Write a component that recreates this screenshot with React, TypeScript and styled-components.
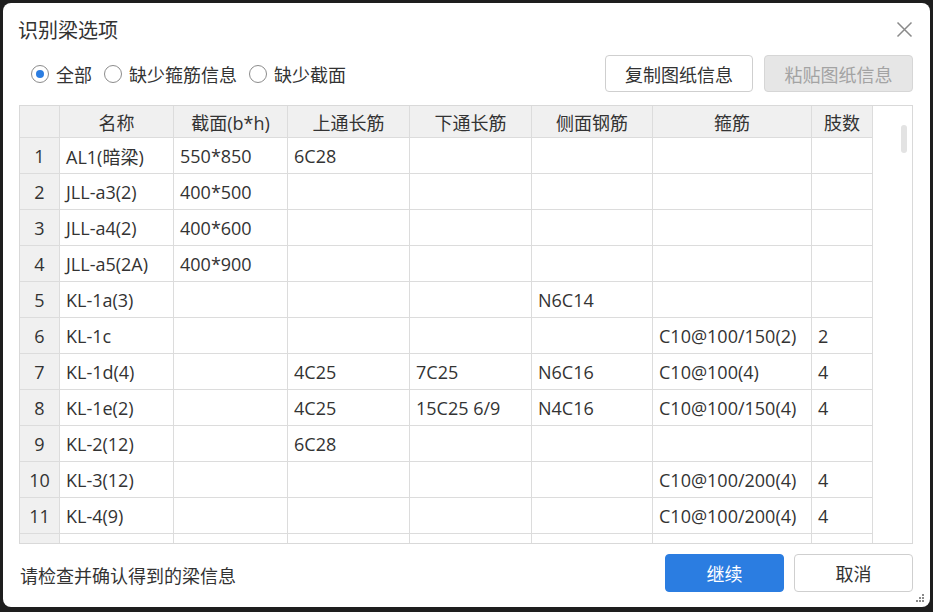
import React from "react";
import styled, { createGlobalStyle } from "styled-components";

const FONT = `"Open Sans", "Noto Sans CJK SC", sans-serif`;

const GlobalStyle = createGlobalStyle`
  html, body { margin: 0; padding: 0; }
  body {
    background: #1e1e1e;
    font-family: ${FONT};
    color: #333;
    width: 933px;
    height: 612px;
    overflow: hidden;
  }
`;

const Dialog = styled.div`
  box-sizing: border-box;
  margin: 3px 0 0 3px;
  width: 927px;
  height: 604px;
  background: #fff;
  border-radius: 8px;
  padding: 0 17px 0 16px;
  display: flex;
  flex-direction: column;
  position: relative;
`;

const TitleBar = styled.div`
  height: 52px;
  display: flex;
  align-items: center;
  justify-content: space-between;
`;

const Title = styled.div`
  font-size: 20px;
  margin-left: -1px;
  color: #333;
`;

const CloseButton = styled.button`
  border: none;
  background: none;
  padding: 0;
  width: 18px;
  height: 18px;
  display: flex;
  align-items: center;
  justify-content: center;
  cursor: pointer;
`;

const Toolbar = styled.div`
  height: 37px;
  display: flex;
  align-items: center;
`;

const RadioGroup = styled.div`
  display: flex;
  align-items: center;
  gap: 12px;
  margin-left: 12px;
  flex: 1;
`;

const RadioLabel = styled.label`
  display: flex;
  align-items: center;
  gap: 7px;
  font-size: 18px;
  color: #333;
`;

const RadioCircle = styled.span<{ $checked?: boolean }>`
  box-sizing: border-box;
  width: 18px;
  height: 18px;
  border-radius: 50%;
  border: 1px solid #8c8c8c;
  background: #fff;
  display: flex;
  align-items: center;
  justify-content: center;
  &::after {
    content: "";
    width: 8px;
    height: 8px;
    border-radius: 50%;
    background: ${(p) => (p.$checked ? "#2b7de1" : "transparent")};
  }
`;

const ToolButton = styled.button<{ $disabled?: boolean; $w: number }>`
  box-sizing: border-box;
  width: ${(p) => p.$w}px;
  height: 37px;
  border-radius: 4px;
  border: 1px solid ${(p) => (p.$disabled ? "#d6d6d6" : "#cfcfcf")};
  background: ${(p) => (p.$disabled ? "#e6e6e6" : "#fff")};
  color: ${(p) => (p.$disabled ? "#a3a3a3" : "#333")};
  font-family: ${FONT};
  font-size: 18px;
  padding: 0;
  margin-left: ${(p) => (p.$disabled ? 11 : 0)}px;
`;

const TableFrame = styled.div`
  margin-top: 13px;
  box-sizing: border-box;
  height: 439px;
  border: 1px solid #d9d9d9;
  display: flex;
  overflow: hidden;
`;

const Grid = styled.div`
  display: grid;
  grid-template-columns: 40px 114px 114px 122px 122px 121px 159px 61px;
  grid-template-rows: 32px;
  grid-auto-rows: 36px;
  align-content: start;
  flex: none;
`;

const Cell = styled.div<{ $head?: boolean; $center?: boolean }>`
  box-sizing: border-box;
  border-right: 1px solid #dcdcdc;
  border-bottom: 1px solid #dcdcdc;
  background: ${(p) => (p.$head ? "#f0f0f0" : "#fff")};
  display: flex;
  align-items: center;
  justify-content: ${(p) => (p.$center ? "center" : "flex-start")};
  padding: 0 ${(p) => (p.$center ? 0 : 6)}px;
  font-size: 18px;
  color: #333;
  white-space: nowrap;
  overflow: hidden;
`;

const Gutter = styled.div`
  flex: 1;
  display: flex;
  justify-content: flex-end;
  padding: 19px 5px 0 0;
`;

const Thumb = styled.div`
  width: 6px;
  height: 28px;
  border-radius: 3px;
  background: #e3e3e3;
`;

const Footer = styled.div`
  margin-top: 10px;
  height: 38px;
  display: flex;
  align-items: center;
`;

const FooterText = styled.div`
  flex: 1;
  font-size: 18px;
  color: #333;
  margin-left: 1px;
  padding-top: 4px;
`;

const FooterButton = styled.button<{ $primary?: boolean }>`
  box-sizing: border-box;
  width: 119px;
  height: 38px;
  border-radius: 4px;
  border: 1px solid ${(p) => (p.$primary ? "#2b7de1" : "#cfcfcf")};
  background: ${(p) => (p.$primary ? "#2b7de1" : "#fff")};
  color: ${(p) => (p.$primary ? "#fff" : "#333")};
  font-family: ${FONT};
  font-size: 18px;
  padding: 0;
  & + & {
    margin-left: 10px;
  }
`;

const Grip = styled.svg`
  position: absolute;
  right: 6px;
  bottom: 4px;
`;

const headers = ["", "名称", "截面(b*h)", "上通长筋", "下通长筋", "侧面钢筋", "箍筋", "肢数"];

const rows: string[][] = [
  ["AL1(暗梁)", "550*850", "6C28", "", "", "", ""],
  ["JLL-a3(2)", "400*500", "", "", "", "", ""],
  ["JLL-a4(2)", "400*600", "", "", "", "", ""],
  ["JLL-a5(2A)", "400*900", "", "", "", "", ""],
  ["KL-1a(3)", "", "", "", "N6C14", "", ""],
  ["KL-1c", "", "", "", "", "C10@100/150(2)", "2"],
  ["KL-1d(4)", "", "4C25", "7C25", "N6C16", "C10@100(4)", "4"],
  ["KL-1e(2)", "", "4C25", "15C25 6/9", "N4C16", "C10@100/150(4)", "4"],
  ["KL-2(12)", "", "6C28", "", "", "", ""],
  ["KL-3(12)", "", "", "", "", "C10@100/200(4)", "4"],
  ["KL-4(9)", "", "", "", "", "C10@100/200(4)", "4"],
];

export default function App() {
  return (
    <>
      <GlobalStyle />
      <Dialog>
        <TitleBar>
          <Title>识别梁选项</Title>
          <CloseButton aria-label="关闭">
            <svg width="17" height="17" viewBox="0 0 17 17">
              <path d="M1.5 1.5 L15.5 15.5 M15.5 1.5 L1.5 15.5" stroke="#8a8a8a" strokeWidth="1.5" fill="none" />
            </svg>
          </CloseButton>
        </TitleBar>
        <Toolbar>
          <RadioGroup>
            <RadioLabel>
              <RadioCircle $checked />
              全部
            </RadioLabel>
            <RadioLabel>
              <RadioCircle />
              缺少箍筋信息
            </RadioLabel>
            <RadioLabel>
              <RadioCircle />
              缺少截面
            </RadioLabel>
          </RadioGroup>
          <ToolButton $w={148}>复制图纸信息</ToolButton>
          <ToolButton $w={149} $disabled>粘贴图纸信息</ToolButton>
        </Toolbar>
        <TableFrame>
          <Grid>
            {headers.map((h, i) => (
              <Cell key={"h" + i} $head $center>
                {h}
              </Cell>
            ))}
            {rows.map((r, ri) => (
              <React.Fragment key={ri}>
                <Cell $head $center>
                  {ri + 1}
                </Cell>
                {r.map((c, ci) => (
                  <Cell key={ci}>{c}</Cell>
                ))}
              </React.Fragment>
            ))}
            <Cell $head $center />
            {headers.slice(1).map((_, ci) => (
              <Cell key={"e" + ci} />
            ))}
          </Grid>
          <Gutter>
            <Thumb />
          </Gutter>
        </TableFrame>
        <Footer>
          <FooterText>请检查并确认得到的梁信息</FooterText>
          <FooterButton $primary>继续</FooterButton>
          <FooterButton>取消</FooterButton>
        </Footer>
        <Grip width="10" height="10" viewBox="0 0 10 10">
          {[
            [8, 0],
            [5, 3],
            [8, 3],
            [2, 6],
            [5, 6],
            [8, 6],
          ].map(([x, y], i) => (
            <rect key={i} x={x} y={y + 1} width="2" height="2" fill="#8a8a8a" />
          ))}
        </Grip>
      </Dialog>
    </>
  );
}
